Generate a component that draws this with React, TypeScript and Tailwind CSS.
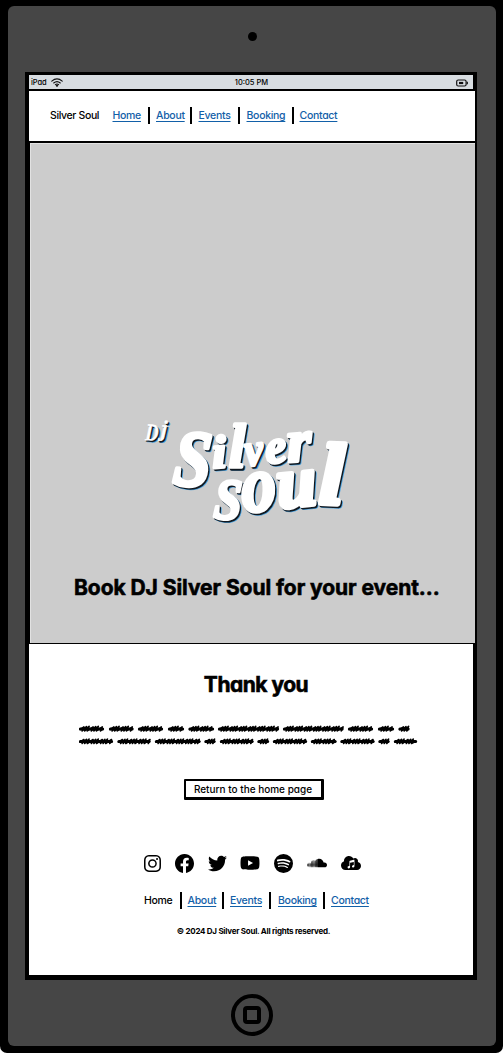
import React from "react";
import { BsInstagram, BsFacebook, BsSpotify } from "react-icons/bs";
import { FaTwitter, FaYoutube, FaSoundcloud, FaCloud } from "react-icons/fa";
import { IoMusicalNotes } from "react-icons/io5";

type Glyph = { ch: string; x: number; y: number; size: number; wide: number; turn: number; weight: number };

const logoGlyphs: Glyph[] = [
  { ch: "D", x: 10, y: 35, size: 24, wide: 0.75, turn: 4, weight: 0.4 },
  { ch: "j", x: 26, y: 31, size: 23, wide: 0.9, turn: 4, weight: 0.4 },
  { ch: "S", x: 37, y: 79, size: 80, wide: 0.84, turn: 5, weight: 4 },
  { ch: "i", x: 78, y: 63, size: 46, wide: 1.1, turn: -4, weight: 3.2 },
  { ch: "l", x: 94, y: 62, size: 62, wide: 0.95, turn: 0, weight: 3.6 },
  { ch: "v", x: 111, y: 61, size: 46, wide: 0.9, turn: -6, weight: 3 },
  { ch: "e", x: 132, y: 59, size: 48, wide: 1, turn: -8, weight: 3 },
  { ch: "r", x: 153, y: 57, size: 60, wide: 1.05, turn: -4, weight: 3.4 },
  { ch: "S", x: 78, y: 113, size: 58, wide: 0.86, turn: 4, weight: 3.2 },
  { ch: "o", x: 108, y: 107, size: 80, wide: 0.86, turn: -4, weight: 4 },
  { ch: "u", x: 144, y: 103, size: 72, wide: 0.98, turn: -6, weight: 5 },
  { ch: "l", x: 184, y: 98, size: 86, wide: 1, turn: 2, weight: 6 },
];

function LogoLayer({ dx, dy, color }: { dx: number; dy: number; color: string }) {
  return (
    <g transform={`translate(${dx} ${dy})`} fill={color} stroke={color} strokeLinejoin="round">
      {logoGlyphs.map((g, i) => (
        <text
          key={i}
          transform={`translate(${g.x} ${g.y}) rotate(${g.turn}) scale(${g.wide} 1)`}
          fontSize={g.size}
          strokeWidth={g.weight}
        >
          {g.ch}
        </text>
      ))}
    </g>
  );
}

function Logo() {
  return (
    <svg
      width="225"
      height="130"
      viewBox="0 0 225 130"
      className="shrink-0 overflow-visible font-['Liberation_Serif',serif] font-bold italic"
    >
      <LogoLayer dx={1.9} dy={2.1} color="#4aa3e0" />
      <LogoLayer dx={1.2} dy={1.6} color="#101820" />
      <LogoLayer dx={0} dy={0} color="#ffffff" />
    </svg>
  );
}

const scribbleRows: [number, number][][] = [
  [[0, 25], [30, 54.5], [59, 84], [89, 105], [109.5, 135], [139, 200], [204, 264.5], [269, 294], [299, 315], [319.5, 330.5]],
  [[0, 34], [38.5, 71.5], [76, 121.5], [125.5, 136.5], [141, 174.5], [178.5, 190], [194, 228], [232, 257.5], [261.5, 295.5], [299.5, 310.5], [315, 338]],
];

function scribble(from: number, to: number, y: number) {
  let d = `M${from + 1} ${y + 0.8}`;
  let n = 0;
  for (let x = from + 4; x < to - 1; x += n % 3 === 0 ? 4 : 2.6) {
    const high = 1.9 + ((n * 7) % 3) * 0.25;
    d += ` L${x + 0.9} ${y - high} L${x - 0.9} ${y + 2.1}`;
    n++;
  }
  return `${d} L${to - 1} ${y}`;
}

function Scribbles() {
  return (
    <svg width="340" height="24" viewBox="0 0 340 24" fill="none" stroke="#000" strokeLinecap="round" strokeLinejoin="round">
      {scribbleRows.map((row, r) =>
        row.map(([a, b], i) => (
          <g key={`${r}-${i}`}>
            <path d={`M${a + 1.4} ${6 + r * 12.6}H${b - 1.4}`} strokeWidth="3" />
            <path d={scribble(a, b, 5.8 + r * 12.6)} strokeWidth="1.6" />
          </g>
        )),
      )}
    </svg>
  );
}

function Divider() {
  return <span className="h-[17px] w-[2px] shrink-0 bg-black" />;
}

function Links({ plainHome = false }: { plainHome?: boolean }) {
  const link = "text-[#1260a8] underline decoration-1 underline-offset-[1.5px] whitespace-nowrap";
  return (
    <nav className="flex items-center text-[10.5px] leading-[17px] font-medium tracking-[-0.3px]">
      <a className={plainHome ? "w-[29px] whitespace-nowrap text-black" : `w-[29px] ${link}`}>Home</a>
      <span className="w-[6.5px]" />
      <Divider />
      <span className="w-[6px]" />
      <a className={`w-[28px] ${link}`}>About</a>
      <span className="w-[6px]" />
      <Divider />
      <span className="w-[6.5px]" />
      <a className={`w-[33px] ${link}`}>Events</a>
      <span className="w-[6px]" />
      <Divider />
      <span className="w-[7px]" />
      <a className={`w-[39px] ${link}`}>Booking</a>
      <span className="w-[6px]" />
      <Divider />
      <span className="w-[6px]" />
      <a className={`w-[38px] ${link}`}>Contact</a>
    </nav>
  );
}

function StatusBar() {
  return (
    <div className="grid h-[14px] w-[444px] shrink-0 grid-cols-3 items-center bg-[#d8dde1] pt-px pr-[5px] pl-[2px] text-[7.5px] leading-none font-medium">
      <div className="flex items-center gap-[4px]">
        <span className="tracking-[-0.1px]">iPad</span>
        <svg width="12" height="9" viewBox="0 0 12 9" fill="none" stroke="#111" strokeWidth="1.1" strokeLinecap="round">
          <path d="M.8 3.2Q6-1.4 11.2 3.2M2.7 5Q6 2.2 9.3 5M4.4 6.7Q6 5.4 7.6 6.7" />
          <circle cx="6" cy="7.8" r=".5" fill="#111" />
        </svg>
      </div>
      <span className="pl-[4px] text-center">10:05 PM</span>
      <svg className="justify-self-end" width="12" height="8" viewBox="0 0 12 8" fill="none" stroke="#111">
        <rect x=".7" y="1" width="9.4" height="6" rx="1.5" strokeWidth="1.2" />
        <path d="M3 4H7.2" strokeWidth="2.2" />
        <path d="M11.3 2.8V5.2" strokeWidth="1.2" />
      </svg>
    </div>
  );
}

function SocialIcons() {
  return (
    <div className="flex h-[20px] w-[217px] items-center justify-between text-black">
      <BsInstagram className="size-[17px]" />
      <BsFacebook className="size-[19px]" />
      <FaTwitter className="size-[19px]" />
      <FaYoutube className="size-[20px]" />
      <BsSpotify className="size-[19px]" />
      <FaSoundcloud className="size-[20px]" />
      <span className="grid size-[20px] place-items-center">
        <FaCloud className="col-start-1 row-start-1 size-[20px]" />
        <IoMusicalNotes className="col-start-1 row-start-1 mt-[2px] size-[10px] text-white" />
      </span>
    </div>
  );
}

export default function App() {
  const heading =
    "text-[21px] leading-[28px] font-bold whitespace-nowrap [-webkit-text-stroke:0.6px_#000] [paint-order:stroke]";
  return (
    <div className="h-[1053px] w-[503px] overflow-hidden bg-white font-['Inter',sans-serif] text-black [font-feature-settings:'cv11']">
      <div className="flex h-[1053px] flex-col rounded-b-[7px] bg-black px-[8px] pt-[6px] pb-[7px]">
        <div className="flex h-[1040px] w-[488px] flex-col items-center rounded-[6px] bg-[#464646]">
          <div className="mt-[26px] size-[9px] shrink-0 rounded-full bg-black" />
          <div className="mt-[31px] mr-[2px] flex h-[908px] w-[452px] shrink-0 flex-col bg-black px-[4px] pt-[3px] pb-[4px]">
            <StatusBar />
            <header className="mt-[2px] flex h-[50px] w-[446px] shrink-0 items-center bg-white pb-px pl-[21px]">
              <span className="w-[62.5px] text-[10.5px] leading-[17px] font-medium tracking-[-0.36px] whitespace-nowrap">
                Silver Soul
              </span>
              <Links />
            </header>
            <section className="mt-[2px] ml-px flex h-[500px] w-[445px] shrink-0 flex-col border-t border-l border-[#e2e2e2] bg-[#ccc] pt-[261px] pl-[104px]">
              <Logo />
              <h1 className={`mt-[39px] ml-[-61px] w-[380px] tracking-[-0.06px] ${heading}`}>
                Book DJ Silver Soul for your event...
              </h1>
            </section>
            <main className="mt-[1px] flex h-[331px] w-[444px] shrink-0 flex-col items-center bg-white pt-[27px]">
              <h2 className={`ml-[10px] tracking-[-0.5px] ${heading}`}>Thank you</h2>
              <div className="mt-[24px] self-start pl-[50px]">
                <Scribbles />
              </div>
              <button className="mt-[32px] ml-[5px] h-[21px] w-[140px] rounded-[1px] border-2 border-r-[3px] border-b-[3px] border-black bg-white text-[10px] leading-[17px] font-medium whitespace-nowrap">
                Return to the home page
              </button>
              <div className="ml-[3px] mt-[53px]">
                <SocialIcons />
              </div>
              <div className="mt-[19px] ml-[11px]">
                <Links plainHome />
              </div>
              <p className="mt-[17px] ml-[5px] text-[8px] leading-[10px] font-bold tracking-[-0.26px] whitespace-nowrap">
                © 2024 DJ Silver Soul. All rights reserved.
              </p>
            </main>
          </div>
          <div className="mt-[14px] flex size-[42px] shrink-0 items-center justify-center rounded-full border-4 border-black">
            <div className="size-[18px] rounded-[4px] border-4 border-black" />
          </div>
        </div>
      </div>
    </div>
  );
}
